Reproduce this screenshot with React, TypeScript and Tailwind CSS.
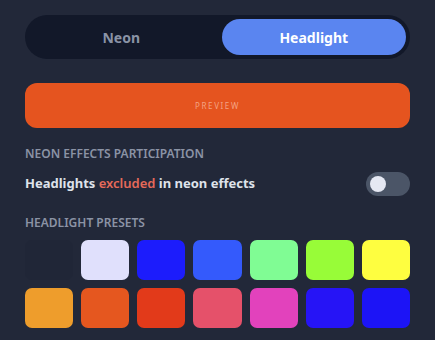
const presets = [
  "#202637", "#e0e0fc", "#1c1cfc", "#345afc", "#80fc94", "#98fc38", "#fefe40",
  "#ee9d2c", "#e5571f", "#e23a1a", "#e5516a", "#e242bc", "#2614f6", "#1c14f6",
];

export default function App() {
  return (
    <div
      className="w-[435px] h-[340px] bg-[#222839] px-[25px] pt-[15px] overflow-hidden"
      style={{ fontFamily: '"Noto Sans", "Open Sans", sans-serif' }}
    >
      <div className="h-[44px] rounded-full bg-[#121829] p-1 grid grid-cols-2 gap-2">
        <button className="rounded-full text-[14px] font-bold text-[#8a93a6]">Neon</button>
        <button className="rounded-full bg-[#5a85f0] text-[14px] font-bold text-white">
          Headlight
        </button>
      </div>

      <button className="mt-6 w-full h-[45px] rounded-xl bg-[#e5541f] text-[8px] tracking-[0.2em] text-[#f4a283]">
        PREVIEW
      </button>

      <div className="mt-[18px] text-[12px] leading-4 font-semibold text-[#8b93a5] uppercase">
        Neon effects participation
      </div>
      <div className="mt-[10px] flex items-center justify-between h-6">
        <span className="text-[13px] font-bold text-[#dfe3ea]">
          Headlights <span className="text-[#e56a5a] font-semibold">excluded</span> in neon effects
        </span>
        <div className="w-11 h-6 rounded-full bg-[#4b5567] flex items-center px-1">
          <div className="w-4 h-4 rounded-full bg-[#e5e8f3]" />
        </div>
      </div>

      <div className="mt-[19px] text-[12px] leading-4 font-semibold text-[#8b93a5] uppercase">
        Headlight presets
      </div>
      <div className="mt-[9px] grid grid-cols-7 gap-2">
        {presets.map((c, i) => (
          <div key={i} className="h-10 rounded-[7px]" style={{ backgroundColor: c }} />
        ))}
      </div>
    </div>
  );
}
